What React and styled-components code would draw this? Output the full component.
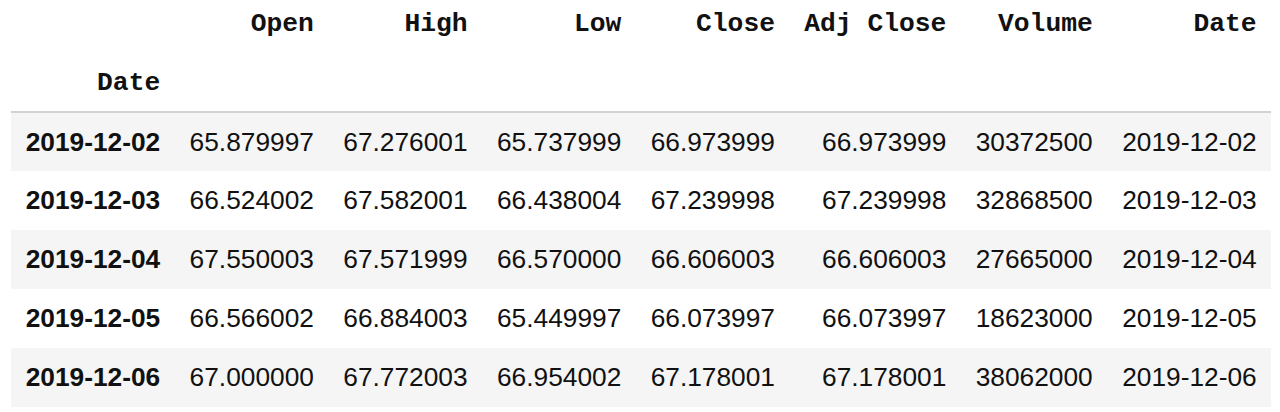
import React from 'react';
import styled, { createGlobalStyle } from 'styled-components';

const GlobalStyle = createGlobalStyle`
    html, body {
        margin: 0;
        padding: 0;
        background: #ffffff;
    }
`;

const columns = ['Open', 'High', 'Low', 'Close', 'Adj Close', 'Volume', 'Date'];

const rows = [
    ['2019-12-02', '65.879997', '67.276001', '65.737999', '66.973999', '66.973999', '30372500', '2019-12-02'],
    ['2019-12-03', '66.524002', '67.582001', '66.438004', '67.239998', '67.239998', '32868500', '2019-12-03'],
    ['2019-12-04', '67.550003', '67.571999', '66.570000', '66.606003', '66.606003', '27665000', '2019-12-04'],
    ['2019-12-05', '66.566002', '66.884003', '65.449997', '66.073997', '66.073997', '18623000', '2019-12-05'],
    ['2019-12-06', '67.000000', '67.772003', '66.954002', '67.178001', '67.178001', '38062000', '2019-12-06']
];

const Frame = styled.div`
    padding: 0 0 0 11px;
`;

const Table = styled.table`
    border-collapse: collapse;
    border-spacing: 0;
    font-family: "Liberation Sans", Arial, Helvetica, sans-serif;
    font-size: 26.3px;
    color: #111111;
`;

const Head = styled.thead`
    border-bottom: 2px solid #d2d2d2;
`;

const HeadRow = styled.tr`
    height: ${props => props.$height}px;
`;

const HeadCell = styled.th`
    font-family: "Liberation Mono", "Courier New", monospace;
    font-weight: bold;
    text-align: right;
    white-space: nowrap;
    vertical-align: middle;
    padding: ${props => props.$top}px 14.7px ${props => props.$bottom}px;
    line-height: 1;
`;

const Row = styled.tr`
    height: 59px;
    background: ${props => props.$striped ? '#f5f5f5' : '#ffffff'};
`;

const IndexCell = styled.th`
    font-weight: bold;
    text-align: right;
    white-space: nowrap;
    padding: 0 14.7px;
    line-height: 1;
`;

const Cell = styled.td`
    text-align: right;
    white-space: nowrap;
    padding: 0 14.7px;
    line-height: 1;
`;

export default function App() {
    return (
        <Frame>
            <GlobalStyle />
            <Table>
                <Head>
                    <HeadRow $height={53}>
                        <HeadCell $top={0} $bottom={5} />
                        {columns.map(name => (
                            <HeadCell key={name} $top={0} $bottom={5}>{name}</HeadCell>
                        ))}
                    </HeadRow>
                    <HeadRow $height={59}>
                        <HeadCell $top={3} $bottom={0}>Date</HeadCell>
                        {columns.map(name => (
                            <HeadCell key={name} $top={3} $bottom={0} />
                        ))}
                    </HeadRow>
                </Head>
                <tbody>
                    {rows.map((row, i) => (
                        <Row key={row[0]} $striped={i % 2 === 0}>
                            <IndexCell>{row[0]}</IndexCell>
                            {row.slice(1).map((value, j) => (
                                <Cell key={j}>{value}</Cell>
                            ))}
                        </Row>
                    ))}
                </tbody>
            </Table>
        </Frame>
    );
}
